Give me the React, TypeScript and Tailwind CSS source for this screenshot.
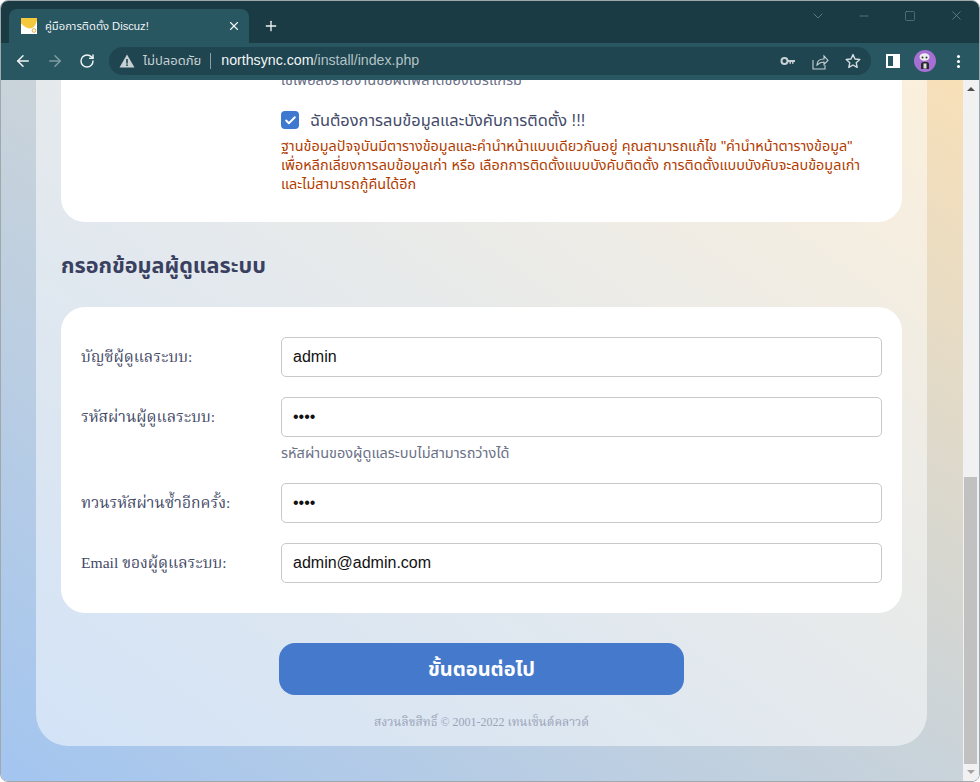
import { ArrowLeft, ArrowRight, RotateCw, Plus, X, Minus, Square, ChevronDown, Check } from "lucide-react";

const sans = "font-['Liberation_Sans','Noto_Sans_Thai','Noto_Sans',sans-serif]";
const serif = "font-['Liberation_Serif','Noto_Serif_Thai','Noto_Sans',serif]";

function Favicon() {
  return (
    <svg width="16" height="16" viewBox="0 0 16 16">
      <rect width="16" height="16" fill="#fff" />
      <path d="M0 0h16v2.500c-1 3.500-2.500 6.500-5 7.500-4 1.500-8-1.500-11-4.500z" fill="#f6c83c" />
      <circle cx="13" cy="12.500" r="1.800" fill="none" stroke="#e2a93a" />
    </svg>
  );
}

function WarningIcon() {
  return (
    <svg width="16" height="16" viewBox="0 0 16 16">
      <path d="M8 1.500 15.500 14.500H.5z" fill="#c7d1d4" />
      <rect x="7.200" y="6" width="1.600" height="4.600" fill="#1f4550" />
      <rect x="7.200" y="11.400" width="1.600" height="1.600" fill="#1f4550" />
    </svg>
  );
}

function KeyIcon() {
  return (
    <svg width="16" height="16" viewBox="0 0 16 16" fill="none">
      <circle cx="4.500" cy="8" r="3" stroke="#c7d1d4" strokeWidth="2" />
      <path d="M7.500 7h7.500v2h-1.500v1.800H12V9h-1v1.800H9.500V9h-2z" fill="#c7d1d4" />
    </svg>
  );
}

function ShareIcon() {
  return (
    <svg width="17" height="17" viewBox="0 0 17 17" fill="none" stroke="#c7d1d4" strokeWidth="1.100">
      <path d="M1 7v9h12v-4" />
      <path d="M5 12c0-4 3-6 7-6V3l4 4.500-4 4V9c-3 0-5 1-7 3z" />
    </svg>
  );
}

function StarIcon() {
  return (
    <svg width="16" height="16" viewBox="0 0 16 16" fill="none" stroke="#d5dee0" strokeWidth="1.400">
      <path d="M8 1.600 10 6l4.800.5-3.600 3.200 1 4.700L8 12l-4.200 2.400 1-4.700L1.200 6.500 6 6z" strokeLinejoin="round" />
    </svg>
  );
}

function Avatar() {
  return (
    <div className="flex h-[22px] w-[22px] items-center justify-center overflow-hidden rounded-full bg-[#a66fd4]">
      <svg width="16" height="18" viewBox="0 0 16 18">
        <ellipse cx="7.500" cy="5" rx="5" ry="3.800" fill="#eeeeee" />
        <circle cx="5.500" cy="5.500" r="1" fill="#333" />
        <circle cx="9.500" cy="5.500" r="1" fill="#333" />
        <path d="M4 17v-5c0-3 8-3 8 0v5z" fill="#2a2a2a" />
        <rect x="6.500" y="11.500" width="3" height="5" fill="#dddddd" />
      </svg>
    </div>
  );
}

function BrowserChrome() {
  return (
    <div className={`${sans} flex shrink-0 flex-col`}>
      <div className="flex h-[42px] items-end bg-[#1a3b44] pl-[8px]">
        <div className="flex h-[34px] w-[240px] items-center rounded-t-[8px] bg-[#285661] pl-[12px] pr-[8px]">
          <Favicon />
          <span className="ml-[8px] flex-1 whitespace-nowrap text-[11.200px] text-[#f1f4f5]">คู่มือการติดตั้ง Discuz!</span>
          <X size={14} strokeWidth={2} className="text-[#f1f4f5]" />
        </div>
        <div className="ml-[14px] flex h-[34px] items-center">
          <Plus size={16} strokeWidth={2} className="text-[#f1f4f5]" />
        </div>
        <div className="ml-auto flex h-[42px] self-start pt-[7px] text-[#80979d]">
          <div className="flex h-[15px] w-[46px] items-center justify-center"><ChevronDown size={16} strokeWidth={1} /></div>
          <div className="flex h-[15px] w-[46px] items-center justify-center"><Minus size={14} strokeWidth={1} /></div>
          <div className="flex h-[15px] w-[46px] items-center justify-center"><Square size={12} strokeWidth={1} /></div>
          <div className="flex h-[15px] w-[46px] items-center justify-center"><X size={15} strokeWidth={1} /></div>
        </div>
      </div>
      <div className="flex h-[37px] items-center bg-[#285661] pb-[1px]">
        <div className="flex w-[108px] items-center pl-[13px] text-[#f1f4f5]">
          <ArrowLeft size={18} strokeWidth={2} />
          <ArrowRight size={18} strokeWidth={2} className="ml-[14px] text-[#7f9ca3]" />
          <RotateCw size={16} strokeWidth={2.200} className="ml-[15px]" />
        </div>
        <div className="flex h-[28px] w-[762px] items-center rounded-full bg-[#1f4550] pl-[10px] pr-[10px]">
          <WarningIcon />
          <span className="ml-[8px] whitespace-nowrap text-[13px] text-[#c7d1d4]">ไม่ปลอดภัย</span>
          <span className="ml-[9px] h-[16px] w-px bg-[#8aa0a6]" />
          <span className="ml-[10px] whitespace-nowrap text-[14.200px] text-[#f1f4f5]">
            northsync.com<span className="text-[#b3c2c6]">/install/index.php</span>
          </span>
          <div className="ml-auto flex items-center gap-[16px]">
            <KeyIcon />
            <ShareIcon />
            <StarIcon />
          </div>
        </div>
        <div className="ml-[15px] h-[14px] w-[14px] border-2 border-white bg-[linear-gradient(to_right,transparent_50%,#fff_50%)]" />
        <div className="ml-[14px]"><Avatar /></div>
        <div className="ml-[21px] flex flex-col gap-[2px]">
          <span className="h-[3px] w-[3px] rounded-full bg-white" />
          <span className="h-[3px] w-[3px] rounded-full bg-white" />
          <span className="h-[3px] w-[3px] rounded-full bg-white" />
        </div>
      </div>
    </div>
  );
}

function Scrollbar() {
  return (
    <div className="flex w-[16px] shrink-0 flex-col items-center bg-[#f1f1f1] pr-px">
      <div className="mt-[7px] h-0 w-0 border-x-[4px] border-b-[4px] border-x-transparent border-b-[#505050]" />
      <div className="mt-[386px] h-[287px] w-[13px] bg-[#c1c1c1]" />
      <div className="mt-[6px] h-0 w-0 border-x-[4px] border-t-[4px] border-x-transparent border-t-[#a3a3a3]" />
    </div>
  );
}

function Field({ label, value, hint }: { label: string; value: string; hint?: string }) {
  return (
    <div>
      <div className="flex items-center">
        <label className={`${serif} w-[200px] shrink-0 text-[15.600px] text-[#434a66]`}>{label}</label>
        <div className={`${sans} flex h-[40px] w-[601px] items-center rounded-[5px] border border-[#c9c9c9] bg-white px-[11px] text-[16px] text-[#111]`}>
          {value}
        </div>
      </div>
      {hint && <p className={`${sans} ml-[200px] mt-[7px] text-[14.500px] leading-[19px] text-[#6b7186]`}>{hint}</p>}
    </div>
  );
}

function Page() {
  return (
    <div className="min-w-0 flex-1 overflow-hidden bg-[linear-gradient(to_top_right,#a3c5f0,#c9d3da_50%,#f8e0b8)] pl-[35px] pr-[36px]">
      <div className="-mt-[12px] rounded-b-[32px] bg-white/50 px-[25px] pb-[14px]">
        <div className={`${sans} rounded-b-[24px] bg-white pb-[28px] pl-[220px]`}>
          <p className="pt-[3px] whitespace-nowrap text-[14.600px] leading-[19px] text-[#6b7186]">ใช้เพื่อส่งรายงานข้อผิดพลาดของโปรแกรม</p>
          <div className="mt-[21px] flex h-[18px] items-center">
            <span className="flex h-[18px] w-[18px] items-center justify-center rounded-[4px] bg-[#3f78cf]">
              <Check size={13} strokeWidth={3.500} className="text-white" />
            </span>
            <span className="ml-[11px] whitespace-nowrap text-[16.400px] text-[#444b6a]">ฉันต้องการลบข้อมูลและบังคับการติดตั้ง !!!</span>
          </div>
          <div className="mt-[8px] whitespace-nowrap text-[14.400px] leading-[19px] text-[#b23c00]">
            <p>ฐานข้อมูลปัจจุบันมีตารางข้อมูลและคำนำหน้าแบบเดียวกันอยู่ คุณสามารถแก้ไข "คำนำหน้าตารางข้อมูล"</p>
            <p>เพื่อหลีกเลี่ยงการลบข้อมูลเก่า หรือ เลือกการติดตั้งแบบบังคับติดตั้ง การติดตั้งแบบบังคับจะลบข้อมูลเก่า</p>
            <p>และไม่สามารถกู้คืนได้อีก</p>
          </div>
        </div>
        <h2 className={`${sans} mt-[29px] text-[21.600px] font-bold leading-[30px] text-[#3a4060]`}>กรอกข้อมูลผู้ดูแลระบบ</h2>
        <div className="mt-[26px] flex flex-col gap-[20px] rounded-[24px] bg-white px-[20px] py-[30px]">
          <Field label="บัญชีผู้ดูแลระบบ:" value="admin" />
          <Field label="รหัสผ่านผู้ดูแลระบบ:" value="••••" hint="รหัสผ่านของผู้ดูแลระบบไม่สามารถว่างได้" />
          <Field label="ทวนรหัสผ่านซ้ำอีกครั้ง:" value="••••" />
          <Field label="Email ของผู้ดูแลระบบ:" value="admin@admin.com" />
        </div>
        <div className="mt-[30px] flex justify-center">
          <button className={`${sans} h-[52px] w-[405px] rounded-[16px] bg-[#4479cb] text-[20px] font-bold text-white`}>ขั้นตอนต่อไป</button>
        </div>
        <p className={`${serif} mt-[18px] text-center text-[12px] leading-[19px] text-[#9aa3b8]`}>สงวนลิขสิทธิ์ © 2001-2022 เทนเซ็นต์คลาวด์</p>
      </div>
    </div>
  );
}

export default function App() {
  return (
    <div className="flex h-[782px] w-[980px] flex-col overflow-hidden rounded-[8px] border border-[#a0a8ac] bg-[#f1f1f1]">
      <BrowserChrome />
      <div className="flex min-h-0 flex-1">
        <Page />
        <Scrollbar />
      </div>
    </div>
  );
}
